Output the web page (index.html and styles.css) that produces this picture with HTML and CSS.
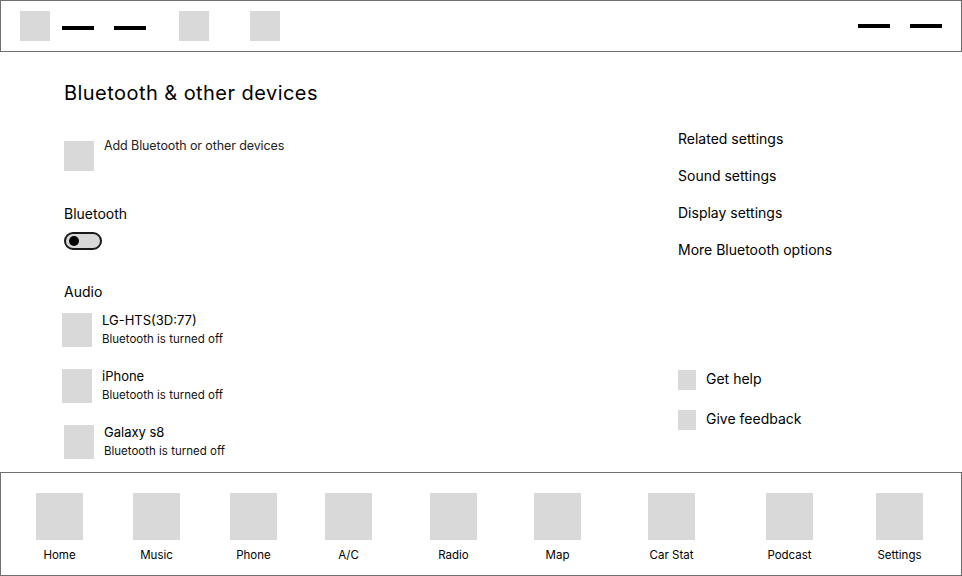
FILE: index.html
```html
<!DOCTYPE html>
<html lang="en">
<head>
<meta charset="utf-8">
<title>Bluetooth &amp; other devices</title>
<link rel="stylesheet" href="styles.css">
</head>
<body>
<div class="app">
  <header class="topbar">
    <div class="tb-left">
      <span class="ph tb-sq"></span>
      <span class="dash"></span>
      <span class="dash dash-2"></span>
      <span class="ph tb-sq tb-sq-2"></span>
      <span class="ph tb-sq tb-sq-3"></span>
    </div>
    <div class="tb-right">
      <span class="dash"></span>
      <span class="dash dash-2"></span>
    </div>
  </header>

  <main class="content">
    <section class="left">
      <h1 class="title">Bluetooth &amp; other devices</h1>
      <div class="add-row">
        <span class="ph add-icon"></span>
        <span class="add-text">Add Bluetooth or other devices</span>
      </div>
      <h2 class="label label-bt">Bluetooth</h2>
      <div class="toggle"><span class="knob"></span></div>
      <h2 class="label label-audio">Audio</h2>
      <ul class="devices">
        <li class="device">
          <span class="ph dev-icon"></span>
          <div class="dev-text">
            <div class="dev-name">LG-HTS(3D:77)</div>
            <div class="dev-sub">Bluetooth is turned off</div>
          </div>
        </li>
        <li class="device">
          <span class="ph dev-icon"></span>
          <div class="dev-text">
            <div class="dev-name">iPhone</div>
            <div class="dev-sub">Bluetooth is turned off</div>
          </div>
        </li>
        <li class="device device-shift">
          <span class="ph dev-icon"></span>
          <div class="dev-text">
            <div class="dev-name">Galaxy s8</div>
            <div class="dev-sub">Bluetooth is turned off</div>
          </div>
        </li>
      </ul>
    </section>

    <aside class="right">
      <ul class="links">
        <li>Related settings</li>
        <li>Sound settings</li>
        <li>Display settings</li>
        <li>More Bluetooth options</li>
      </ul>
      <ul class="help">
        <li class="help-row"><span class="ph help-icon"></span><span>Get help</span></li>
        <li class="help-row"><span class="ph help-icon"></span><span>Give feedback</span></li>
      </ul>
    </aside>
  </main>

  <nav class="bottom">
    <div class="nav-item"><span class="ph nav-icon"></span><span class="nav-label">Home</span></div>
    <div class="nav-item"><span class="ph nav-icon"></span><span class="nav-label">Music</span></div>
    <div class="nav-item"><span class="ph nav-icon"></span><span class="nav-label">Phone</span></div>
    <div class="nav-item"><span class="ph nav-icon"></span><span class="nav-label">A/C</span></div>
    <div class="nav-item"><span class="ph nav-icon"></span><span class="nav-label">Radio</span></div>
    <div class="nav-item"><span class="ph nav-icon"></span><span class="nav-label">Map</span></div>
    <div class="nav-item"><span class="ph nav-icon"></span><span class="nav-label">Car Stat</span></div>
    <div class="nav-item"><span class="ph nav-icon"></span><span class="nav-label">Podcast</span></div>
    <div class="nav-item"><span class="ph nav-icon"></span><span class="nav-label">Settings</span></div>
  </nav>
</div>
</body>
</html>
```

FILE: styles.css
```css
* { box-sizing: border-box; }

html, body {
  margin: 0;
  padding: 0;
  background: #fff;
}

body {
  font-family: Inter, "Noto Sans", "Liberation Sans", sans-serif;
  color: #000;
}

.app {
  width: 962px;
  height: 576px;
  display: flex;
  flex-direction: column;
}

.ph {
  display: block;
  background: #d9d9d9;
  flex: none;
}

/* ---------- top bar ---------- */
.topbar {
  height: 52px;
  border: 1px solid #707070;
  display: flex;
  justify-content: space-between;
  align-items: center;
  padding: 0 19px;
  flex: none;
}

.tb-left, .tb-right {
  display: flex;
  align-items: center;
}

.tb-sq {
  width: 30px;
  height: 30px;
}

.dash {
  display: block;
  width: 32px;
  height: 4px;
  background: #000;
  margin-left: 12px;
}

.tb-left .dash { margin-top: 4px; }
.dash-2 { margin-left: 20px; }
.tb-sq-2 { margin-left: 33px; }
.tb-sq-3 { margin-left: 41px; }
.tb-right .dash:first-child { margin-left: 0; }

/* ---------- content ---------- */
.content {
  flex: 1;
  display: grid;
  grid-template-columns: 614px 1fr;
  padding-left: 64px;
}

.title {
  margin: 29px 0 0;
  font-size: 20px;
  line-height: 24px;
  font-weight: 400;
  letter-spacing: 0.45px;
}

.add-row {
  display: flex;
  align-items: flex-start;
  gap: 10px;
  margin-top: 36px;
}

.add-icon {
  width: 30px;
  height: 30px;
}

.add-text {
  font-size: 12.5px;
  line-height: 16px;
  letter-spacing: -0.1px;
  margin-top: -3px;
  color: #222;
}

.label {
  margin: 0;
  font-size: 14px;
  line-height: 17px;
  font-weight: 400;
}

.label-bt { margin-top: 34px; }
.label-audio { margin-top: 33px; }

.toggle {
  margin-top: 10px;
  width: 38px;
  height: 18px;
  border: 2px solid #1a1a1a;
  border-radius: 9px;
  background: #d9d9d9;
  display: flex;
  align-items: center;
  padding-left: 3px;
}

.knob {
  display: block;
  width: 10px;
  height: 10px;
  border-radius: 50%;
  background: #000;
}

.devices {
  list-style: none;
  margin: 13px 0 0;
  padding: 0;
  display: flex;
  flex-direction: column;
  gap: 22px;
}

.device {
  display: flex;
  align-items: flex-start;
  gap: 10px;
  margin-left: -2px;
}

.device-shift { margin-left: 0; }

.dev-icon {
  width: 30px;
  height: 34px;
}

.dev-name {
  font-size: 13px;
  line-height: 16px;
  margin-top: -1px;
}

.dev-sub {
  margin-top: 4px;
  font-size: 11.5px;
  line-height: 14px;
  color: #111;
}

/* ---------- right column ---------- */
.right {
  padding-top: 78px;
}

.links {
  list-style: none;
  margin: 0;
  padding: 0;
  display: flex;
  flex-direction: column;
  gap: 20px;
  font-size: 14px;
  line-height: 17px;
}

.help {
  list-style: none;
  margin: 112px 0 0;
  padding: 0;
  display: flex;
  flex-direction: column;
  gap: 20px;
  font-size: 14px;
  line-height: 17px;
}

.help-row {
  display: flex;
  align-items: flex-start;
  gap: 10px;
  height: 20px;
}

.help-icon {
  width: 18px;
  height: 20px;
}

/* ---------- bottom nav ---------- */
.bottom {
  height: 104px;
  flex: none;
  border: 1px solid #707070;
  display: grid;
  grid-template-columns: 95px 99px 95px 95px 115px 93px 135px 101px 119px;
  padding: 20px 0 0 11px;
}

.nav-item {
  display: flex;
  flex-direction: column;
  align-items: center;
}

.nav-icon {
  width: 47px;
  height: 47px;
}

.nav-label {
  margin-top: 8px;
  font-size: 11.5px;
  line-height: 15px;
  white-space: nowrap;
}
```
